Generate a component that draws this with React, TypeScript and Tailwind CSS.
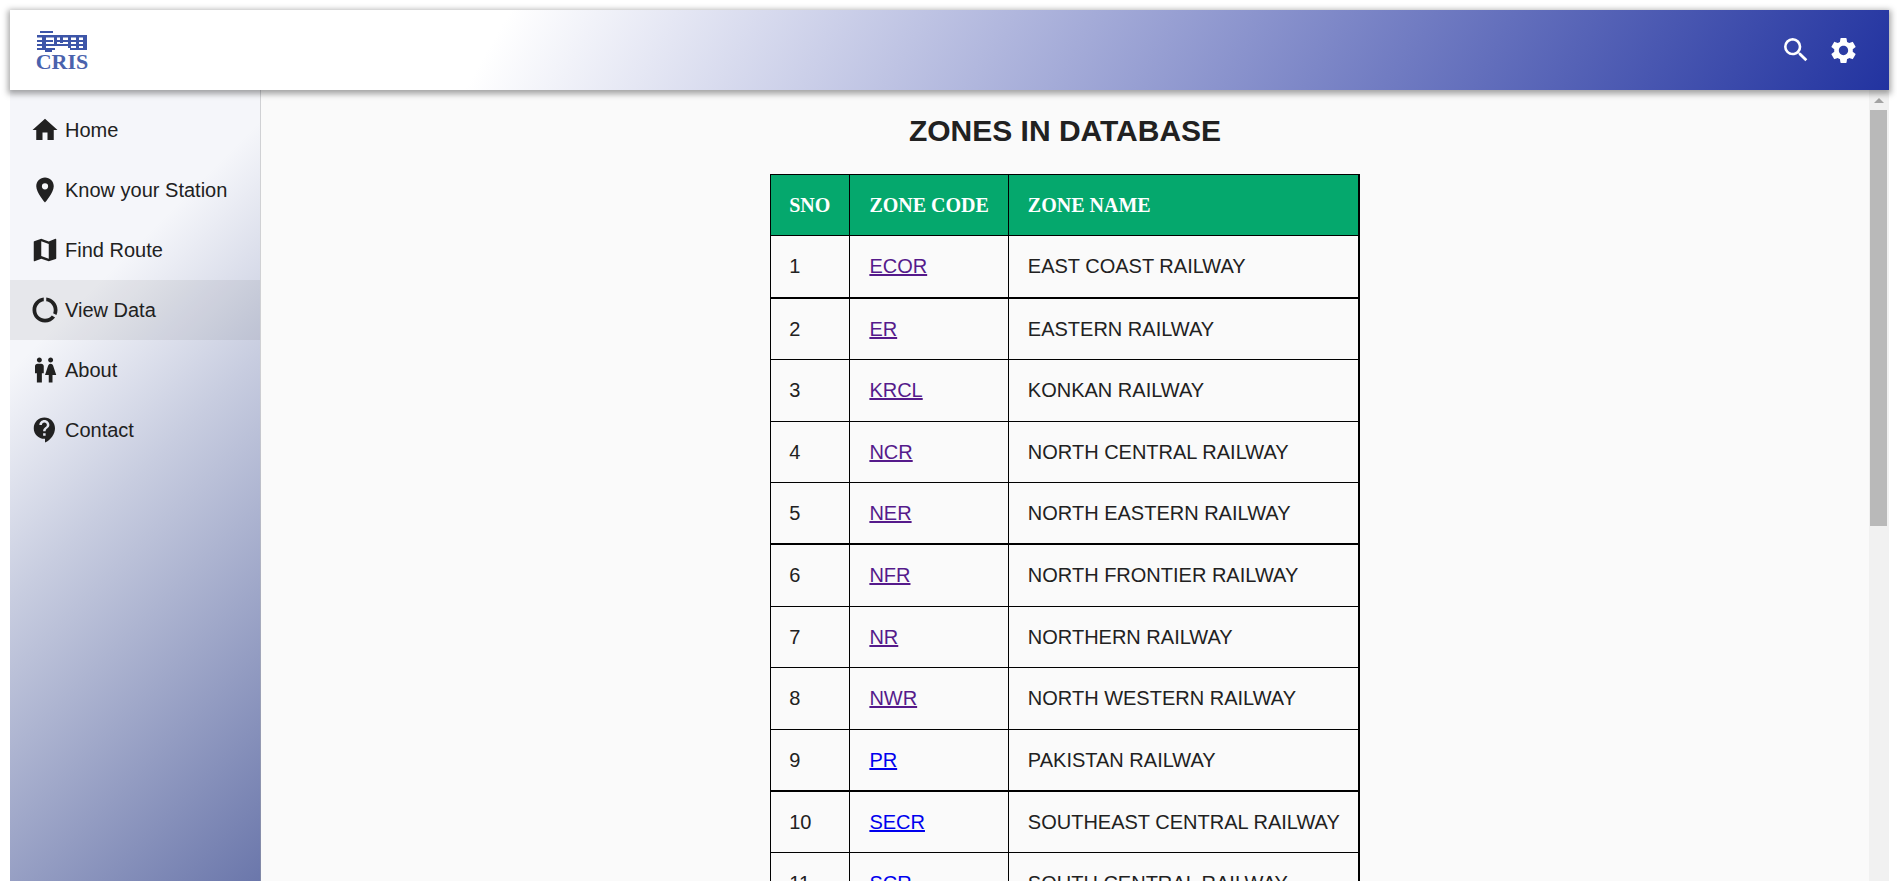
import { MdContactSupport, MdDataUsage, MdHome, MdMap, MdPlace, MdSearch, MdSettings, MdWc } from 'react-icons/md';

const navItems = [
  { label: 'Home', icon: MdHome },
  { label: 'Know your Station', icon: MdPlace },
  { label: 'Find Route', icon: MdMap },
  { label: 'View Data', icon: MdDataUsage, active: true },
  { label: 'About', icon: MdWc },
  { label: 'Contact', icon: MdContactSupport },
];

const zones = [
  { code: 'ECOR', name: 'EAST COAST RAILWAY', visited: true, thick: true },
  { code: 'ER', name: 'EASTERN RAILWAY', visited: true },
  { code: 'KRCL', name: 'KONKAN RAILWAY', visited: true },
  { code: 'NCR', name: 'NORTH CENTRAL RAILWAY', visited: true },
  { code: 'NER', name: 'NORTH EASTERN RAILWAY', visited: true, thick: true },
  { code: 'NFR', name: 'NORTH FRONTIER RAILWAY', visited: true },
  { code: 'NR', name: 'NORTHERN RAILWAY', visited: true },
  { code: 'NWR', name: 'NORTH WESTERN RAILWAY', visited: true },
  { code: 'PR', name: 'PAKISTAN RAILWAY', thick: true },
  { code: 'SECR', name: 'SOUTHEAST CENTRAL RAILWAY' },
  { code: 'SCR', name: 'SOUTH CENTRAL RAILWAY' },
];

// rough stripes of the emblem above the CRIS letters
function Logo() {
  return (
    <div className="flex w-[52px] flex-col items-center">
      <svg width="52" height="21" viewBox="0 0 52 21" fill="#3d55a8">
        <rect x="4" y="0" width="13" height="2" />
        <rect x="1" y="4" width="50" height="2.5" />
        <rect x="6" y="4" width="4" height="13" />
        <rect x="18" y="4" width="3" height="10" />
        <rect x="24" y="4" width="3" height="8" />
        <rect x="32" y="4" width="3" height="13" />
        <rect x="40" y="4" width="3" height="13" />
        <rect x="47" y="4" width="4" height="13" />
        <rect x="1" y="9" width="16" height="2" />
        <rect x="21" y="9" width="12" height="2" />
        <rect x="35" y="9" width="13" height="2" />
        <rect x="1" y="13" width="50" height="2" />
        <rect x="1" y="17" width="18" height="2" />
        <rect x="34" y="17" width="17" height="2" />
        <rect x="9" y="19" width="7" height="2" />
      </svg>
      <span className="mt-[1px] font-['Liberation_Serif',serif] text-[22px] leading-[17px] font-bold text-[#4a62ad]">CRIS</span>
    </div>
  );
}

function Scrollbar() {
  return (
    <div className="flex w-5 flex-shrink-0 flex-col bg-[#f1f1f1] pr-[2px] pl-[1px]">
      <div className="flex h-5 flex-shrink-0 items-center justify-center">
        <span className="h-0 w-0 border-x-[5px] border-b-[5px] border-x-transparent border-b-[#a3a3a3]" />
      </div>
      <div className="h-[416px] bg-[#b9b9b9]" />
    </div>
  );
}

export default function App() {
  return (
    <div className="flex h-[882px] flex-col overflow-hidden bg-white pt-[10px] pr-2 pb-[1px] pl-[10px] font-['Liberation_Sans',Arial,sans-serif] text-[#212121]">
      <header className="relative z-10 flex h-20 flex-shrink-0 items-center justify-between bg-[linear-gradient(120deg,#ffffff_26%,#2233a0_100%)] pr-[30px] pl-[26px] shadow-[0_2px_6px_2px_rgba(0,0,0,0.35)]">
        <Logo />
        <div className="flex items-center gap-[16px] text-white">
          <MdSearch size={32} />
          <MdSettings size={31} />
        </div>
      </header>

      <div className="flex min-h-0 flex-1">
        <aside className="w-[251px] flex-shrink-0 border-r border-black/15 bg-[linear-gradient(135deg,#f5f6fa_27%,#c8cde0_49%,#6b77ab_100%)] pt-[10px]">
          <nav>
            {navItems.map((item) => (
              <div key={item.label} className={`flex h-[60px] items-center gap-[5px] pl-5 text-[20px] ${item.active ? 'bg-black/[0.06]' : ''}`}>
                <item.icon size={30} className="flex-shrink-0" />
                <span>{item.label}</span>
              </div>
            ))}
          </nav>
        </aside>

        <main className="flex min-w-0 flex-1 flex-col items-center overflow-hidden bg-[#fafafa] pt-[23px]">
          <h1 className="mb-[25px] text-[30px] leading-9 font-bold">ZONES IN DATABASE</h1>
          <table className="flex-shrink-0 border-collapse text-[20px] leading-[1.42]">
            <thead>
              <tr className="bg-[#05a86d] font-['Liberation_Serif',serif] text-white">
                <th className="border border-black py-4 pr-[19px] pl-[18px] text-left font-bold">SNO</th>
                <th className="border border-black px-[19px] py-4 text-left font-bold">ZONE CODE</th>
                <th className="border border-r-2 border-black py-4 pr-[18px] pl-[19px] text-left font-bold">ZONE NAME</th>
              </tr>
            </thead>
            <tbody>
              {zones.map((zone, index) => (
                <tr key={zone.code} className={zone.thick ? 'border-b-2 border-black' : ''}>
                  <td className="border-x border-t border-black py-4 pr-[19px] pl-[18px]">{index + 1}</td>
                  <td className="border-x border-t border-black px-[19px] py-4">
                    <a href="#" className={`underline ${zone.visited ? 'text-[#551a8b]' : 'text-[#0000ee]'}`}>{zone.code}</a>
                  </td>
                  <td className="border-t border-r-2 border-l border-black py-4 pr-[18px] pl-[19px]">{zone.name}</td>
                </tr>
              ))}
            </tbody>
          </table>
        </main>
        <Scrollbar />
      </div>
    </div>
  );
}
